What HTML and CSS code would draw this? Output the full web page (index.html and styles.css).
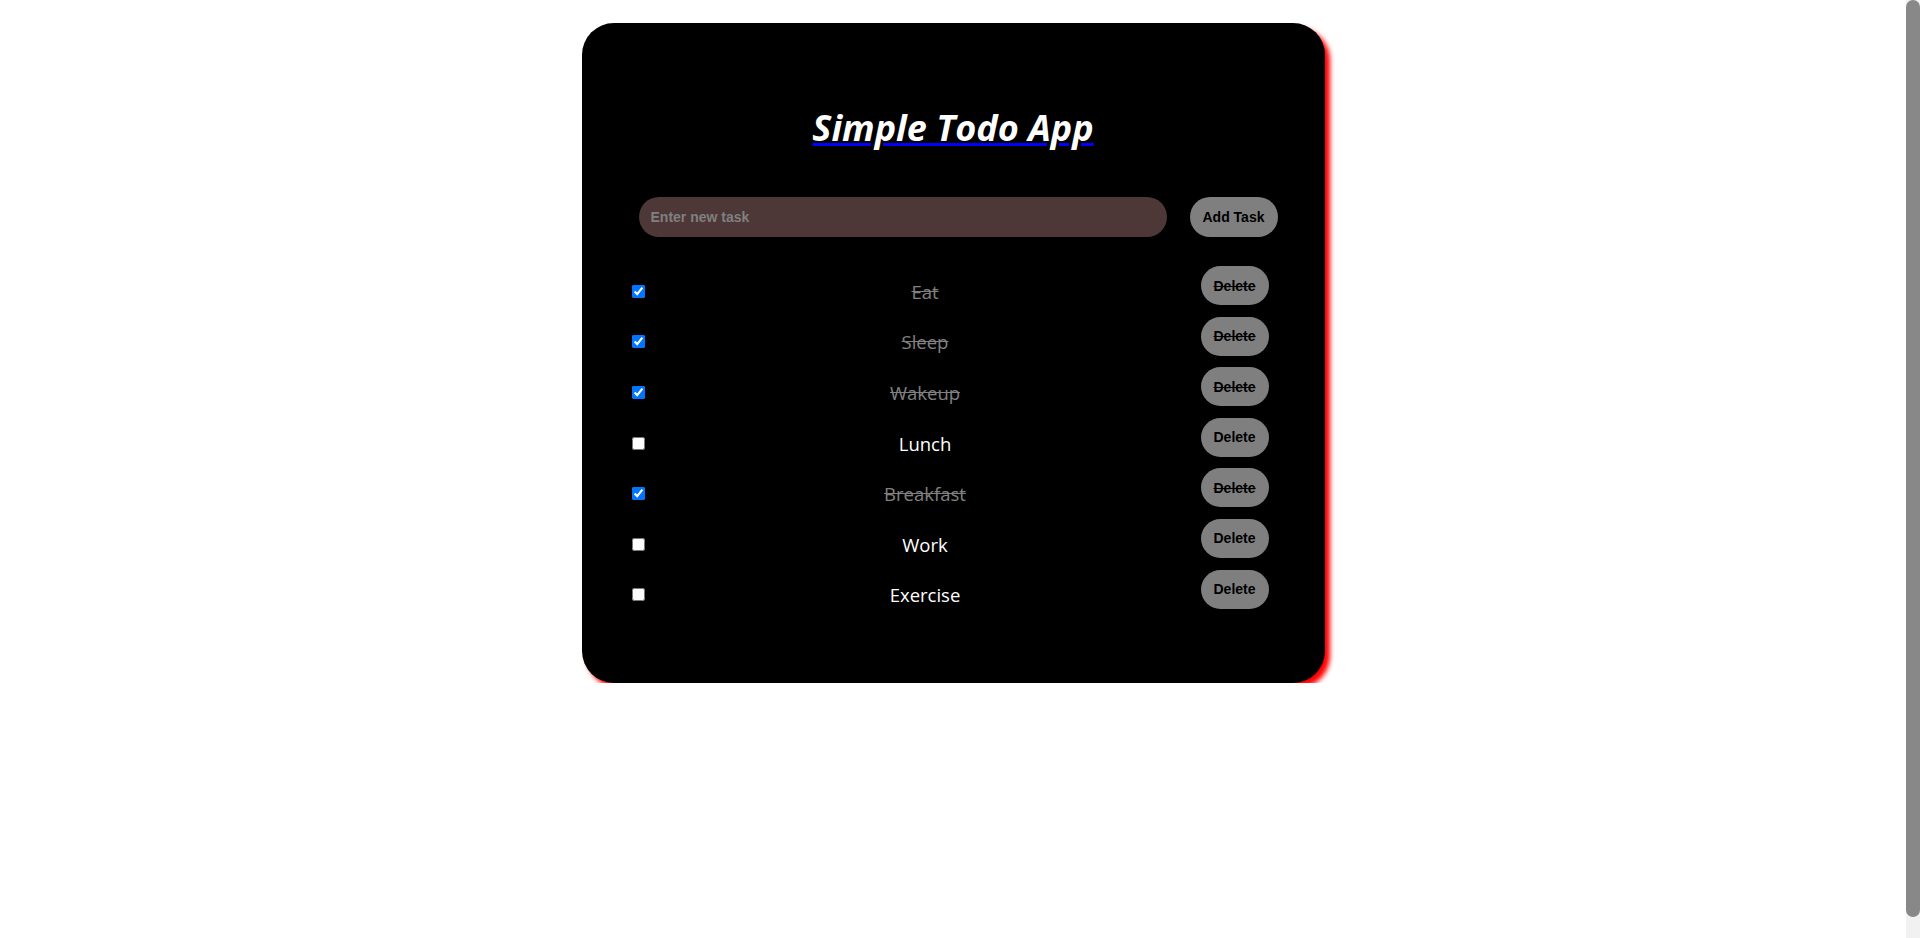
FILE: index.html
```html
<!DOCTYPE html>
<html lang="en">
<head>
<meta charset="utf-8">
<title>Simple Todo App</title>
<link rel="stylesheet" href="styles.css">
</head>
<body>
<div class="page">
  <div class="card">
    <h1 class="title">Simple Todo App</h1>
    <form class="new-task" onsubmit="return false">
      <input class="task-input" type="text" placeholder="Enter new task">
      <button class="btn add-btn" type="button">Add Task</button>
    </form>
    <ul class="tasks">
      <li class="task done"><input class="check" type="checkbox" checked><span class="label">Eat</span><button class="btn del-btn" type="button">Delete</button></li>
      <li class="task done"><input class="check" type="checkbox" checked><span class="label">Sleep</span><button class="btn del-btn" type="button">Delete</button></li>
      <li class="task done"><input class="check" type="checkbox" checked><span class="label">Wakeup</span><button class="btn del-btn" type="button">Delete</button></li>
      <li class="task"><input class="check" type="checkbox"><span class="label">Lunch</span><button class="btn del-btn" type="button">Delete</button></li>
      <li class="task done"><input class="check" type="checkbox" checked><span class="label">Breakfast</span><button class="btn del-btn" type="button">Delete</button></li>
      <li class="task"><input class="check" type="checkbox"><span class="label">Work</span><button class="btn del-btn" type="button">Delete</button></li>
      <li class="task"><input class="check" type="checkbox"><span class="label">Exercise</span><button class="btn del-btn" type="button">Delete</button></li>
    </ul>
  </div>
</div>
<div class="scrollbar" aria-hidden="true"><div class="scroll-thumb"></div></div>
</body>
</html>
```
FILE: styles.css
```css
html {
  background: #fff;
}
body {
  margin: 0;
  font-family: "Open Sans", "Liberation Sans", sans-serif;
}
.page {
  box-sizing: border-box;
  padding: 23px 14px 0 0;
}
.card {
  box-sizing: border-box;
  width: 743px;
  height: 660px;
  margin: 0 auto;
  background: #000;
  border-radius: 32px;
  box-shadow: 5px 5px 5px #ff0000;
  padding-top: 83px;
}
.title {
  margin: 0;
  text-align: center;
  color: #fff;
  font-size: 36px;
  line-height: 44px;
  font-weight: 700;
  font-style: italic;
  text-decoration: underline;
  text-decoration-color: #0000ff;
  text-decoration-thickness: 3px;
}
.new-task {
  display: flex;
  align-items: center;
  gap: 23px;
  margin: 47px 0 0;
  padding: 0 47px 0 57px;
}
.task-input {
  box-sizing: border-box;
  width: 528px;
  height: 40px;
  border: none;
  border-radius: 20px;
  background: #4d3737;
  padding: 0 12px;
  font-family: "Liberation Sans", Arial, sans-serif;
  font-size: 14px;
  font-weight: 700;
  color: #ddd;
  outline: none;
}
.task-input::placeholder {
  color: #808080;
}
.btn {
  box-sizing: border-box;
  height: 39px;
  border: none;
  border-radius: 20px;
  background: #7f7f7f;
  color: #000;
  font-family: "Liberation Sans", Arial, sans-serif;
  font-size: 14px;
  font-weight: 700;
  padding: 0 12px;
}
.add-btn {
  width: 88px;
  height: 40px;
}
.tasks {
  list-style: none;
  margin: 29px 0 0;
  padding: 0 56px 0 50px;
}
.task {
  display: flex;
  align-items: center;
  height: 50.6px;
}
.check {
  margin: 0;
  width: 13px;
  height: 13px;
}
.label {
  flex: 1;
  text-align: center;
  color: #fff;
  font-size: 18.5px;
  padding-left: 5px;
}
.del-btn {
  width: 68px;
  align-self: flex-start;
}
.done .label {
  color: #808080;
  text-decoration: line-through;
}
.done .del-btn {
  text-decoration: line-through;
}
.scrollbar {
  position: fixed;
  top: 0;
  right: 0;
  width: 14px;
  height: 100%;
  background: #f1f1f1;
}
.scroll-thumb {
  height: 917px;
  background: #888;
  border-radius: 7px;
}
```
